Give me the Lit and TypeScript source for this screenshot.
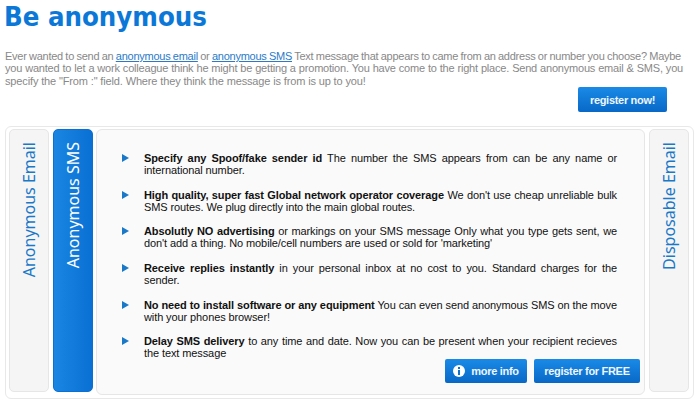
import { LitElement, html, css } from "lit";
import { customElement } from "lit/decorators.js";

const items: [string, string][] = [
  ["Specify any Spoof/fake sender id", " The number the SMS appears from can be any name or international number."],
  ["High quality, super fast Global network operator coverage", " We don't use cheap unreliable bulk SMS routes. We plug directly into the main global routes."],
  ["Absolutly NO advertising", " or markings on your SMS message Only what you type gets sent, we don't add a thing. No mobile/cell numbers are used or sold for 'marketing'"],
  ["Receive replies instantly", " in your personal inbox at no cost to you. Standard charges for the sender."],
  ["No need to install software or any equipment", " You can even send anonymous SMS on the move with your phones browser!"],
  ["Delay SMS delivery", " to any time and date. Now you can be present when your recipient recieves the text message"],
];

@customElement("app-root")
export class AppRoot extends LitElement {
  static styles = css`
    :host { display: block; width: 700px; height: 408px; overflow: hidden; background: #fff; font-family: "Liberation Sans", Arial, sans-serif; font-size: 11px; }
    h1 { margin: 0; padding: 0 0 0 4px; height: 50px; font-family: "DejaVu Sans Condensed", "DejaVu Sans", sans-serif; font-size: 27.3px; line-height: 33px; font-weight: 700; color: #0b78d8; }
    .intro { margin: 0; padding: 0 0 0 5px; height: 37px; color: #888; line-height: 12.3px; letter-spacing: -0.14px; }
    .intro a { color: #2a7ac8; text-decoration: underline; }
    .line { display: block; }
    .l1 { width: 676px; letter-spacing: -0.25px; word-spacing: -1px; text-align: justify; text-align-last: justify; }
    .l2 { width: 678px; letter-spacing: -0.2px; word-spacing: -1px; text-align: justify; text-align-last: justify; }
    .top { display: flex; justify-content: flex-end; padding: 0 33px 14px 0; }
    .btn { display: inline-flex; align-items: center; justify-content: center; gap: 6px; box-sizing: border-box; height: 25px; color: #eef6fd; font-weight: 700; font-size: 11px; letter-spacing: -0.3px; border-radius: 2px; background: linear-gradient(#1a8ae6, #0868c8); }
    .b1 { width: 89px; }
    .b2 { width: 82px; height: 24px; }
    .b3 { width: 106px; height: 24px; }
    .panel { box-sizing: border-box; margin-left: 5px; width: 689px; height: 273px; border: 1px solid #e8e8e8; border-radius: 6px; padding: 2px 4px 3px 3px; display: flex; gap: 4px; }
    .tab { box-sizing: border-box; width: 40px; height: 263px; border-radius: 5px; background: #f5f5f5; border: 1px solid #e6e6e6; display: flex; align-items: flex-start; justify-content: center; padding-top: 12px; color: #1a78c8; }
    .tab span { writing-mode: vertical-rl; transform: rotate(180deg); font-family: "Noto Sans", sans-serif; font-size: 16px; white-space: nowrap; line-height: 20px; }
    .tab.on { background: linear-gradient(90deg, #1a86e2, #0a70d4); border-color: #0a70d4; color: #fff; }
    .body { position: relative; box-sizing: border-box; width: 549px; height: 266px; margin-left: -1px; border: 1px solid #e6e6e6; border-radius: 6px; background: #fafafa; padding: 22px 27px 0 25px; color: #111; }
    ul { list-style: none; margin: 0; padding: 0; display: flex; flex-direction: column; gap: 12.7px; }
    li { display: flex; gap: 15px; line-height: 12px; letter-spacing: -0.1px; }
    .arrow { flex: none; width: 0; height: 0; margin-top: 2px; border-left: 7px solid #1a78c8; border-top: 4px solid transparent; border-bottom: 4px solid transparent; }
    .text { flex: 1; text-align: justify; }
    .actions { position: absolute; right: 4px; bottom: 11px; display: flex; gap: 7px; }
    svg { display: block; }
  `;
  render() {
    return html`
      <h1>Be anonymous</h1>
      <p class="intro"><span class="line l1">Ever wanted to send an <a>anonymous email</a> or <a>anonymous SMS</a> Text message that appears to came from an address or number you choose? Maybe</span><span class="line l2">you wanted to let a work colleague think he might be getting a promotion. You have come to the right place. Send anonymous email &amp; SMS, you</span><span class="line">specify the "From :" field. Where they think the message is from is up to you!</span></p>
      <div class="top"><span class="btn b1">register now!</span></div>
      <div class="panel">
        <div class="tab"><span>Anonymous Email</span></div>
        <div class="tab on"><span>Anonymous SMS</span></div>
        <div class="body">
          <ul>
            ${items.map(([b, t]) => html`<li><i class="arrow"></i><div class="text"><b>${b}</b>${t}</div></li>`)}
          </ul>
          <div class="actions">
            <span class="btn b2"><svg width="12" height="12" viewBox="0 0 12 12"><circle cx="6" cy="6" r="6" fill="#fff"/><rect x="5" y="2" width="2" height="2" fill="#0b72d0"/><rect x="5" y="5" width="2" height="5" fill="#0b72d0"/></svg>more info</span>
            <span class="btn b3">register for FREE</span>
          </div>
        </div>
        <div class="tab"><span>Disposable Email</span></div>
      </div>
    `;
  }
}
